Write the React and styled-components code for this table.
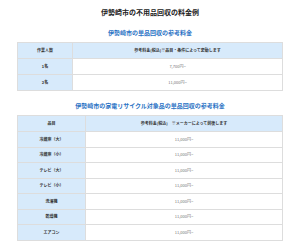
import React from "react"
import styled, { createGlobalStyle } from "styled-components"

const GlobalStyle = createGlobalStyle`
  html, body {
    margin: 0;
    padding: 0;
    background: #ffffff;
  }
  body {
    font-family: "Noto Sans CJK JP", "Noto Sans", sans-serif;
    color: #333333;
  }
`

const Page = styled.div`
  width: 300px;
  padding: 0 17px;
  box-sizing: border-box;
`

const Title = styled.h1`
  margin: 7px 0 0;
  font-size: 7px;
  line-height: 10px;
  font-weight: 700;
  text-align: center;
  color: #222222;
`

const SubTitle = styled.h2`
  margin: ${(p) => p.$top}px 0 0;
  font-size: 6px;
  line-height: 9px;
  font-weight: 700;
  text-align: center;
  color: #2a72c4;
`

const Table = styled.table`
  width: 100%;
  margin-top: ${(p) => p.$top}px;
  border-collapse: collapse;
  table-layout: fixed;
  border: 1px solid #dddddd;
`

const HeadCell = styled.th`
  background: #d7eafb;
  border: 1px solid #dddddd;
  height: ${(p) => p.$h}px;
  padding: 0;
  font-size: 4px;
  line-height: 5px;
  font-weight: 700;
  color: #333333;
  text-align: center;
  vertical-align: middle;
`

const NameCell = styled.td`
  background: #d7eafb;
  border: 1px solid #dddddd;
  height: ${(p) => p.$h}px;
  padding: 0;
  font-size: 4px;
  line-height: 5px;
  font-weight: 700;
  color: #333333;
  text-align: center;
  vertical-align: middle;
`

const PriceCell = styled.td`
  background: #ffffff;
  border: 1px solid #dddddd;
  padding: 0;
  font-size: 4px;
  line-height: 5px;
  color: #777777;
  text-align: center;
  vertical-align: middle;
`

const single = [
  { name: "1名", price: "7,700円~" },
  { name: "2名", price: "11,000円~" },
]

const appliances = [
  "冷蔵庫（大）",
  "冷蔵庫（小）",
  "テレビ（大）",
  "テレビ（小）",
  "洗濯機",
  "乾燥機",
  "エアコン",
]

export default function App() {
  return (
    <>
      <GlobalStyle />
      <Page>
        <Title>伊勢崎市の不用品回収の料金例</Title>

        <SubTitle $top={11}>伊勢崎市の単品回収の参考料金</SubTitle>
        <Table $top={5}>
          <colgroup>
            <col style={{ width: 55 }} />
            <col />
          </colgroup>
          <thead>
            <tr>
              <HeadCell $h={15}>作業人数</HeadCell>
              <HeadCell $h={15}>参考料金(税込)※品目・条件によって変動します</HeadCell>
            </tr>
          </thead>
          <tbody>
            {single.map(({ name, price }) => (
              <tr key={name}>
                <NameCell $h={15}>{name}</NameCell>
                <PriceCell>{price}</PriceCell>
              </tr>
            ))}
          </tbody>
        </Table>

        <SubTitle $top={10}>伊勢崎市の家電リサイクル対象品の単品回収の参考料金</SubTitle>
        <Table $top={5}>
          <colgroup>
            <col style={{ width: 68 }} />
            <col />
          </colgroup>
          <thead>
            <tr>
              <HeadCell $h={15}>品目</HeadCell>
              <HeadCell $h={15}>参考料金(税込)　※メーカーによって前後します</HeadCell>
            </tr>
          </thead>
          <tbody>
            {appliances.map((name) => (
              <tr key={name}>
                <NameCell $h={14.5}>{name}</NameCell>
                <PriceCell>11,000円~</PriceCell>
              </tr>
            ))}
          </tbody>
        </Table>
      </Page>
    </>
  )
}
